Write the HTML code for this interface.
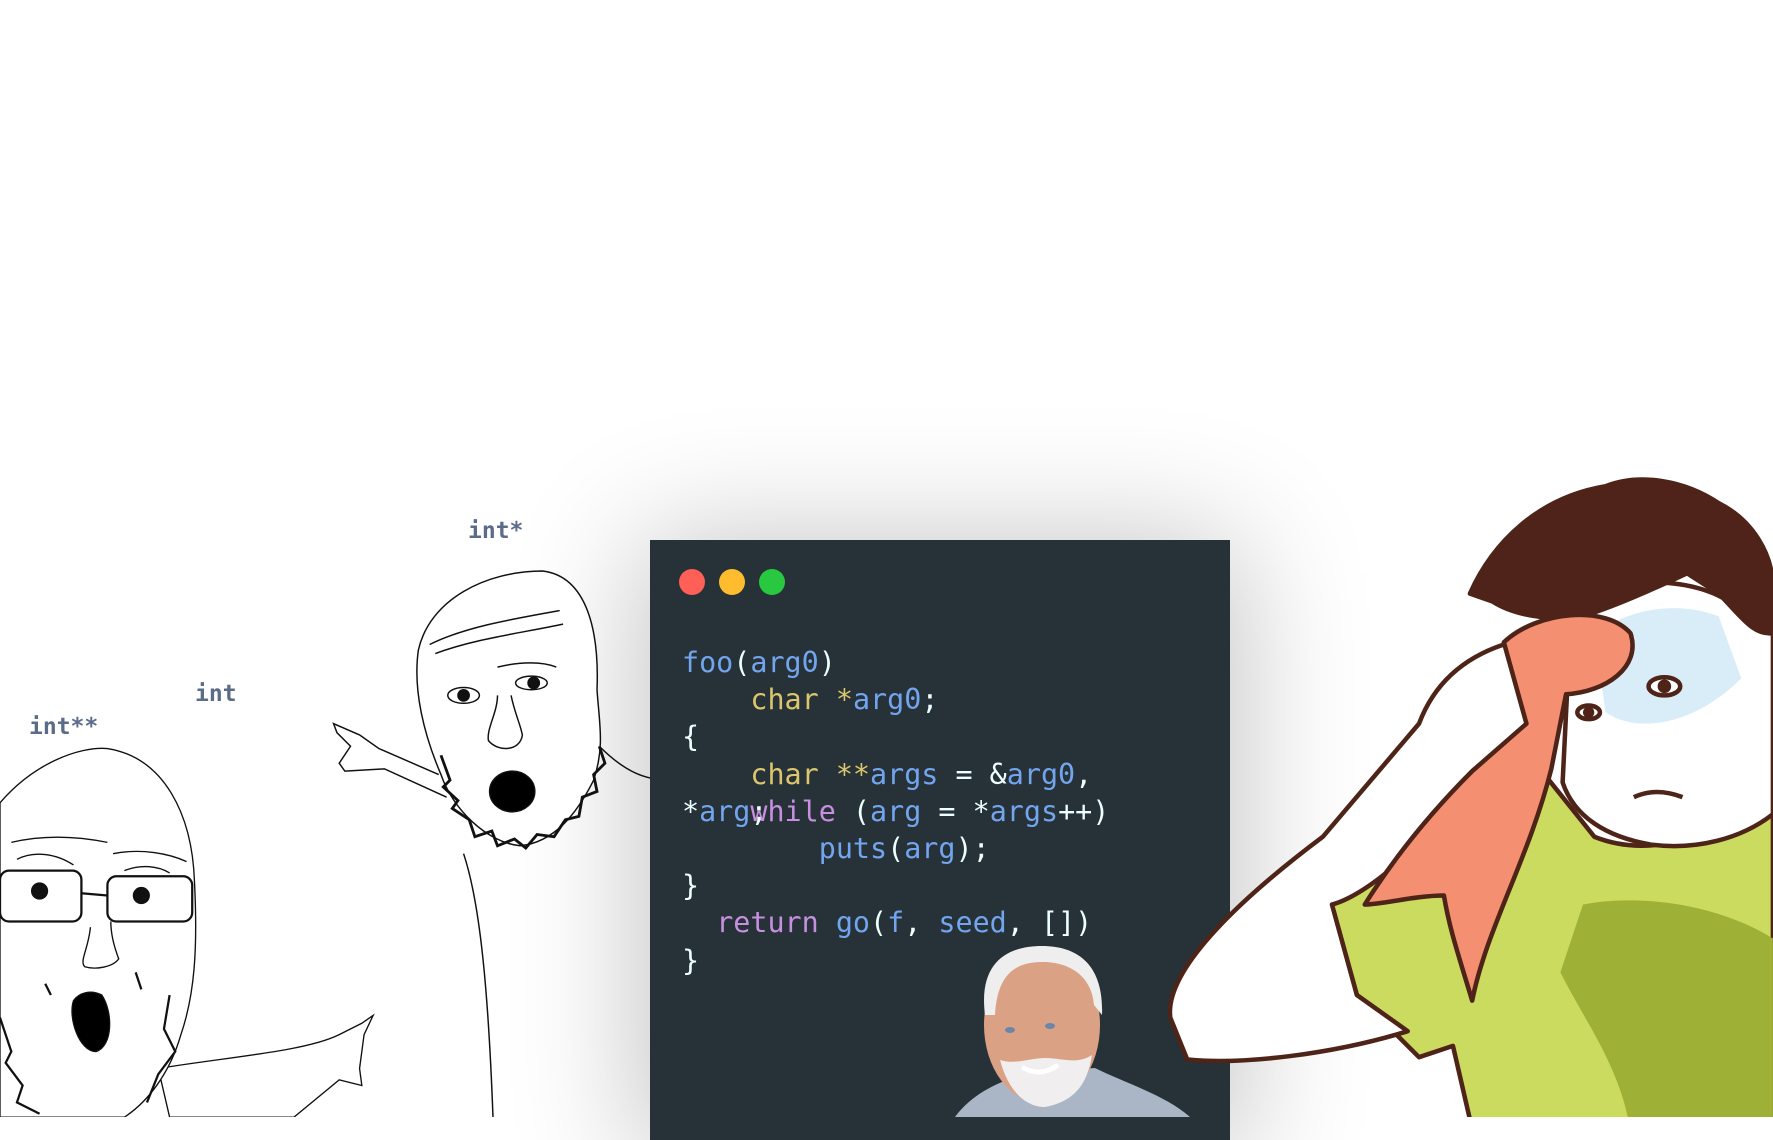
<!DOCTYPE html>
<html><head><meta charset="utf-8"><style>
html,body{margin:0;padding:0;background:#fff;}
body{width:1773px;height:1117px;position:relative;overflow:hidden;font-family:"DejaVu Sans Mono","Liberation Mono",monospace;}
#panel{position:absolute;left:650px;top:540px;width:580px;height:600px;background:#263238;box-shadow:0 10px 120px 10px rgba(0,0,0,.24);}
.dot{position:absolute;top:569px;width:26px;height:26px;border-radius:50%;}
.code{position:absolute;left:682px;font-size:28.4px;line-height:37.2px;white-space:pre;color:#eeffff;}
.b{color:#72a5ee}.y{color:#dcc66d}.p{color:#c78fe0}
.lbl{position:absolute;font-family:"DejaVu Sans Mono",monospace;font-weight:bold;font-size:23px;color:#5c6c88;}
svg{position:absolute;left:0;top:0;}
</style></head><body>
<div style="position:absolute;left:1343px;top:510px;width:430px;height:607px;background:#fff"></div>
<div id="panel"></div>
<div class="dot" style="left:679px;background:#fe5f57"></div>
<div class="dot" style="left:719px;background:#febc2e"></div>
<div class="dot" style="left:759px;background:#28c840"></div>
<div class="code" style="top:644px"><span class="b">foo</span>(<span class="b">arg0</span>)
    <span class="y">char</span> <span class="y">*</span><span class="b">arg0</span>;
{
    <span class="y">char</span> <span class="y">**</span><span class="b">args</span> = &amp;<span class="b">arg0</span>,
*<span class="b">arg</span>;
        <span class="b">puts</span>(<span class="b">arg</span>);
}
  <span class="p">return</span> <span class="b">go</span>(<span class="b">f</span>, <span class="b">seed</span>, [])
}</div>
<div class="code" style="top:792.8px">    <span class="p">while</span> (<span class="b">arg</span> = *<span class="b">args</span>++)</div>
<div class="lbl" style="left:468px;top:518px">int*</div>
<div class="lbl" style="left:195px;top:681px">int</div>
<div class="lbl" style="left:29px;top:714px">int**</div>
<svg width="1773" height="1117" viewBox="0 0 1773 1117">
<!-- Harold -->
<g>
<path d="M955,1117 C975,1090 1005,1080 1030,1072 L1095,1068 C1125,1083 1165,1095 1190,1117 Z" fill="#aab5c6"/>
<ellipse cx="1042" cy="1025" rx="58" ry="78" fill="#dba184"/>
<path d="M985,1015 C978,960 1010,946 1042,946 C1078,946 1104,965 1102,1015 L1094,1005 C1092,978 1072,962 1042,962 C1012,962 997,978 995,1015 Z" fill="#eee"/>
<path d="M1000,1060 C1010,1097 1030,1107 1045,1107 C1072,1102 1087,1087 1092,1055 C1077,1065 1062,1058 1045,1058 C1030,1058 1015,1065 1000,1060 Z" fill="#f0eeee"/>
<path d="M1022,1067 Q1040,1078 1058,1065" stroke="#fff" stroke-width="5" fill="none"/>
<ellipse cx="1010" cy="1030" rx="5" ry="3" fill="#6a86a8"/><ellipse cx="1050" cy="1026" rx="5" ry="3" fill="#6a86a8"/>
</g>
<g transform="scale(1.1307)">
<!-- right wojak -->
<g fill="#fff" stroke="#111" stroke-width="1.3">
<path d="M410,755 C425,800 432,880 436,988" fill="none"/>
<path d="M530,660 C545,675 560,685 575,688" fill="none"/>
<path d="M388,685 L335,662 L318,650 L295,640 L298,648 L310,660 L300,675 L305,682 L340,680 L395,705" />
<path d="M370,575 C380,530 430,505 480,505 C520,510 530,560 528,610 C530,640 535,660 525,690 C510,720 490,745 460,748 C430,745 400,715 390,685 C375,650 365,610 370,575 Z"/>
<path d="M380,570 C410,555 450,548 495,540 M385,578 C420,565 460,560 498,552 M440,590 C460,585 480,585 492,590" fill="none"/>
<ellipse cx="410" cy="615" rx="14" ry="7"/><ellipse cx="470" cy="604" rx="14" ry="6"/>
<circle cx="410" cy="615" r="5" fill="#111"/><circle cx="472" cy="604" r="5" fill="#111"/>
<path d="M440,615 C440,630 430,645 432,655 C440,665 460,665 462,650 C460,640 455,630 452,615" fill="none"/>
<ellipse cx="453" cy="700" rx="20" ry="18" fill="#000"/>
<path d="M390,668 L398,690 L392,696 L405,708 L400,715 L415,725 L420,740 L435,735 L440,748 L455,742 L465,750 L475,738 L490,740 L500,725 L512,722 L515,705 L528,700 L525,685 L535,675 L530,660" fill="none" stroke-width="2.5"/>
</g>
<!-- left wojak -->
<g fill="#fff" stroke="#111" stroke-width="1.2">
<path d="M140,945 C200,935 270,930 300,915 L320,905 L330,898 L322,915 L318,945 L320,960 L300,955 L260,988 L150,988 Z"/>
<path d="M0,710 C30,675 70,660 95,662 C145,670 170,720 172,780 C175,840 172,880 160,915 C150,950 130,975 110,988 L0,988 Z"/>
<path d="M10,745 C40,738 70,740 95,745 M100,755 C125,750 150,755 165,762 M15,760 C30,752 50,755 65,765 M110,770 C125,764 140,766 150,772" fill="none"/>
<rect x="0" y="770" width="72" height="45" rx="8" fill="none" stroke-width="2"/>
<rect x="95" y="775" width="75" height="40" rx="8" fill="none" stroke-width="2"/>
<path d="M72,790 L95,792" fill="none" stroke-width="2"/>
<circle cx="35" cy="788" r="7" fill="#111"/><circle cx="125" cy="792" r="7" fill="#111"/>
<path d="M80,820 C78,840 70,850 75,855 C85,858 100,855 105,848 C100,835 98,825 98,815" fill="none"/>
<path d="M65,885 C60,900 70,930 85,930 C100,925 100,895 90,880 C80,875 70,878 65,885 Z" fill="#000"/>
<path d="M0,900 L10,930 L5,940 L20,960 L15,975 L35,985 M150,880 L145,910 L155,930 L140,950 L130,975 M40,870 L45,880 M120,860 L125,875" fill="none" stroke-width="2"/>
</g>
<!-- sweating guy -->
<g stroke="#4e2318" stroke-width="4" stroke-linejoin="round">
<path d="M1175,790 C1220,760 1300,720 1370,690 L1410,740 C1460,760 1520,740 1568,700 L1568,990 L1300,990 L1285,925 L1255,935 L1200,880 Z" fill="#cbdb5f"/>
<path d="M1400,800 C1450,790 1520,800 1568,830 L1568,990 L1440,990 C1430,940 1400,900 1380,860 Z" fill="#9fb036" stroke="none"/>
<path d="M1035,900 C1030,860 1090,800 1170,740 L1255,640 C1270,600 1300,580 1330,570 L1400,580 L1405,605 L1360,622 L1372,655 L1350,668 L1310,700 C1260,740 1215,790 1178,800 L1200,880 L1245,912 C1180,932 1100,942 1050,937 Z" fill="#fff"/>
<path d="M1390,530 C1430,512 1500,505 1540,540 L1568,560 L1568,720 C1540,742 1500,752 1460,747 C1420,740 1392,722 1382,692 Z" fill="#fff"/>
<path d="M1410,560 C1440,540 1480,530 1520,545 L1540,600 C1500,640 1450,650 1420,630 Z" fill="#d9edf9" stroke="none"/>
<path d="M1300,525 C1320,480 1360,440 1420,430 C1450,418 1490,425 1520,445 C1550,460 1568,490 1568,520 L1568,560 C1550,562 1540,545 1520,525 L1492,507 C1460,522 1420,540 1395,546 C1370,548 1340,545 1320,532 Z" fill="#4f231a"/>
<path d="M1330,568 C1360,540 1420,535 1442,560 C1452,590 1420,612 1385,614 L1372,680 C1352,760 1315,820 1302,885 C1290,845 1282,822 1277,792 C1252,792 1222,800 1207,800 C1232,760 1262,722 1302,682 L1350,640 Z" fill="#f48f72"/>
<ellipse cx="1472" cy="607" rx="14" ry="8" fill="#fff"/><circle cx="1472" cy="607" r="6" fill="#4e2318" stroke="none"/>
<ellipse cx="1405" cy="630" rx="10" ry="6" fill="#fff"/><circle cx="1405" cy="630" r="5" fill="#4e2318" stroke="none"/>
<path d="M1445,705 C1460,698 1475,700 1488,705" fill="none"/>
</g>
</g>
</svg>
</body></html>
